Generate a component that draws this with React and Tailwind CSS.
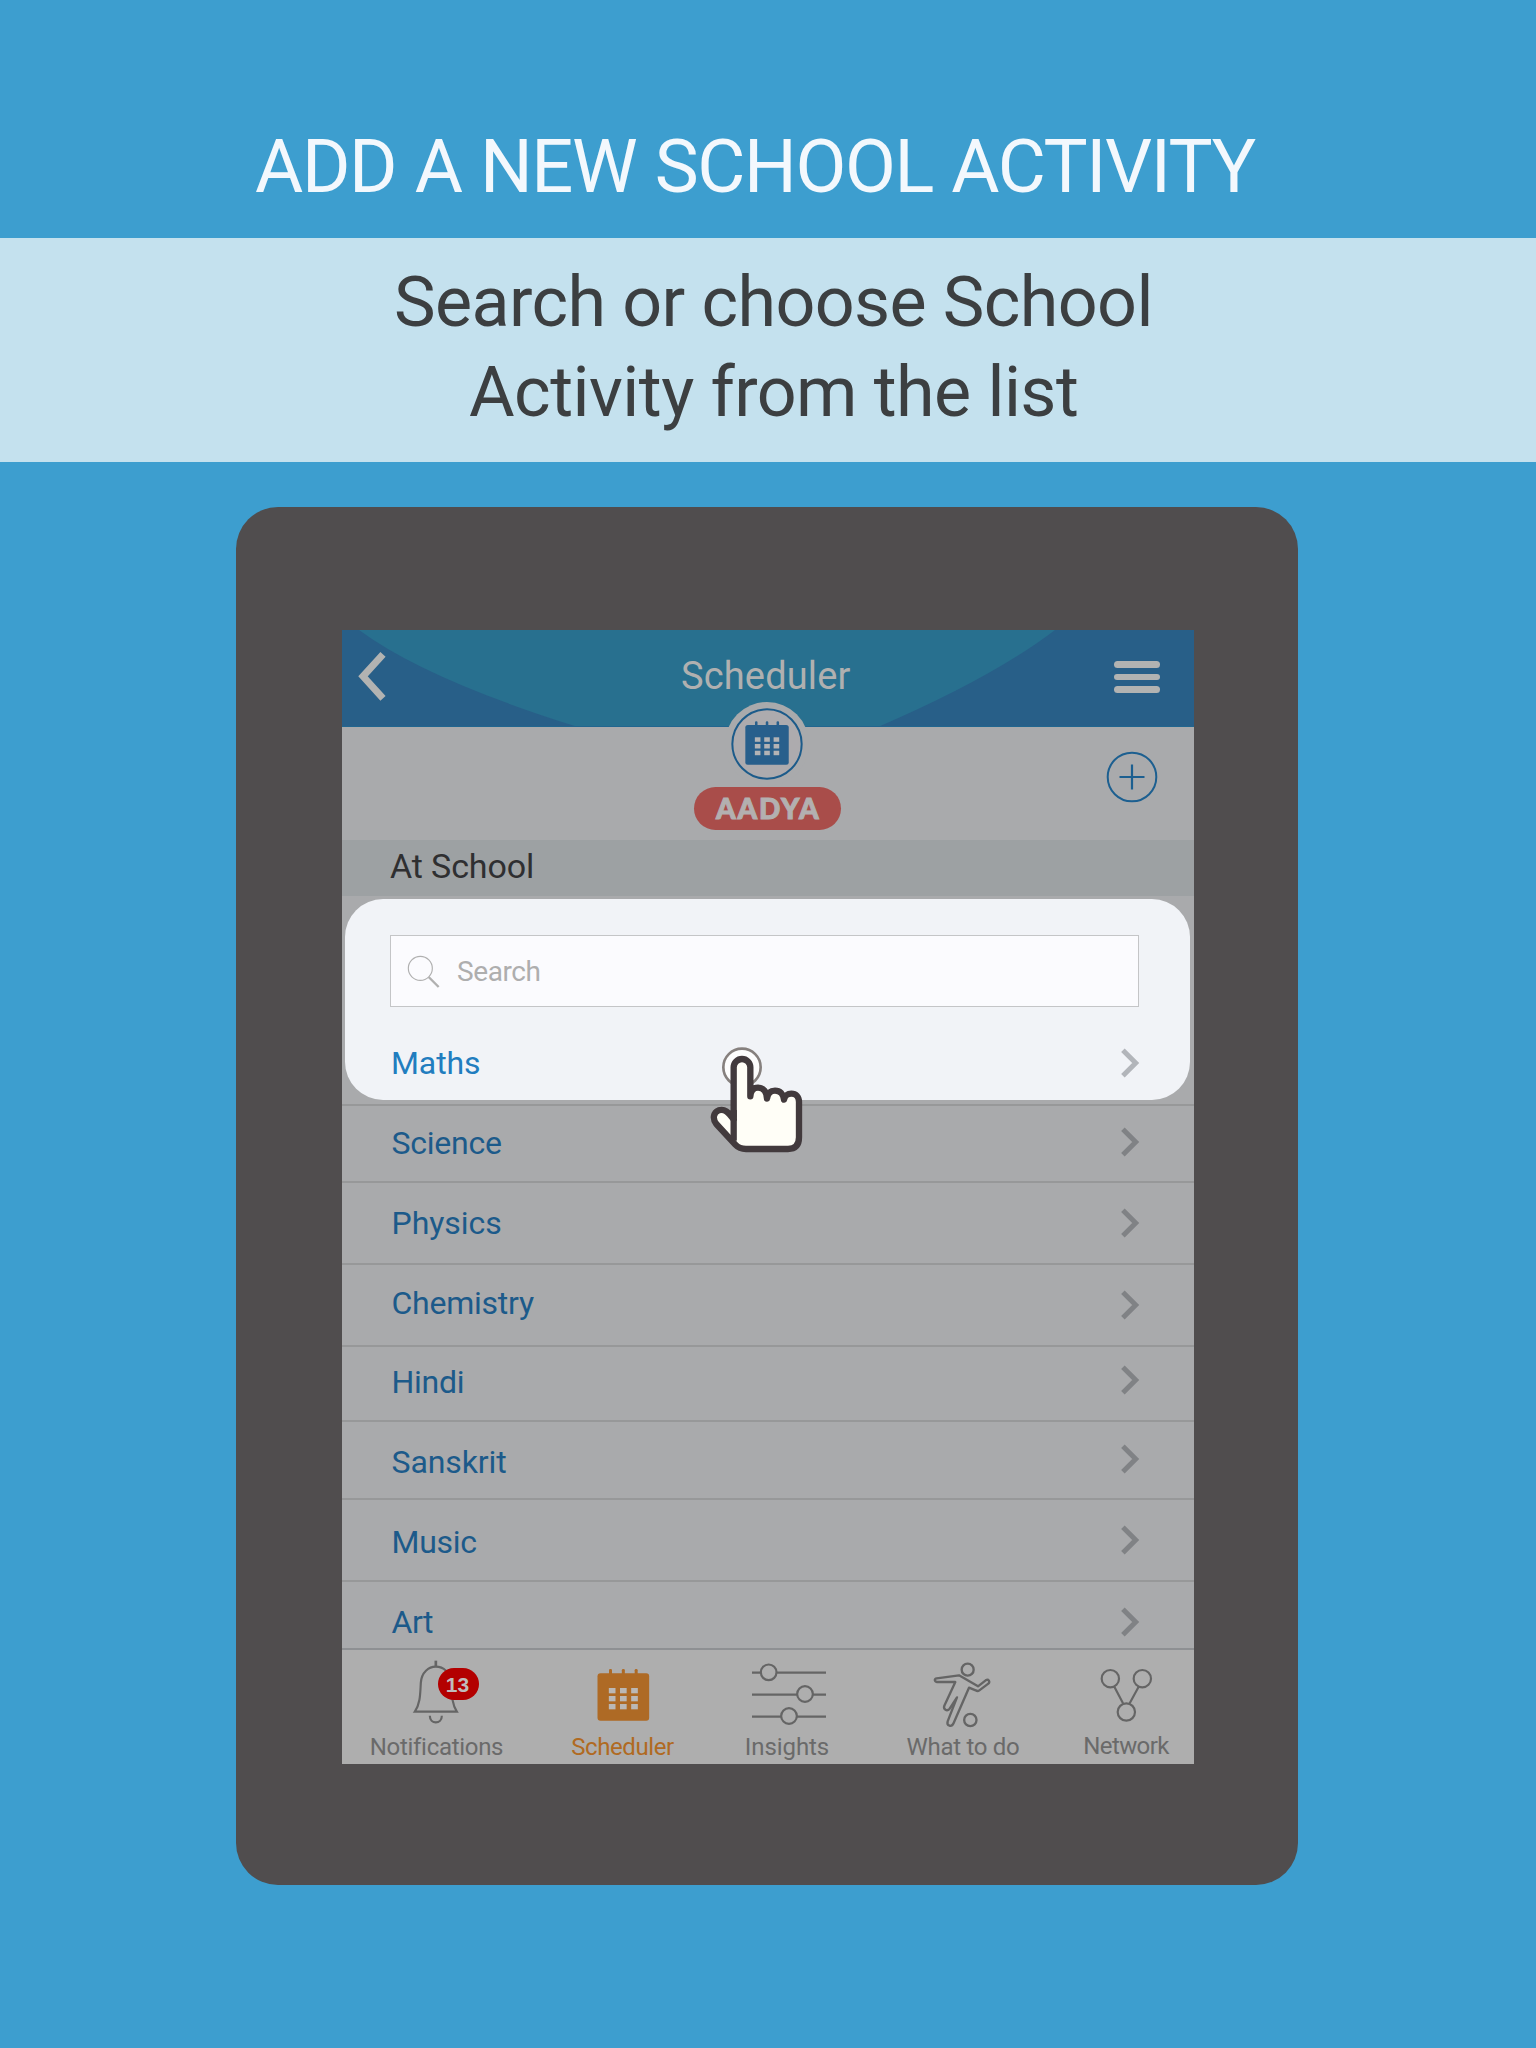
import React from "react";

const subjects = [
  { name: "Science", row: "h-[77px]", text: "mt-[17px] tracking-[-0.25px]", arrow: "mt-[21px]" },
  { name: "Physics", row: "h-[82px]", text: "mt-[20px] tracking-[-0.05px]", arrow: "mt-[25px]" },
  { name: "Chemistry", row: "h-[82px]", text: "mt-[18px] tracking-[-0.25px]", arrow: "mt-[25px]" },
  { name: "Hindi", row: "h-[75px]", text: "mt-[15px] tracking-[-0.3px]", arrow: "mt-[18px]" },
  { name: "Sanskrit", row: "h-[78px]", text: "mt-[20px] tracking-[-0.1px]", arrow: "mt-[22px]" },
  { name: "Music", row: "h-[82px]", text: "mt-[22px] tracking-[-0.3px]", arrow: "mt-[25px]" },
  { name: "Art", row: "h-[68px]", text: "mt-[20px] tracking-[-0.5px]", arrow: "mt-[25px]" },
];

function Chevron({ className }) {
  return (
    <svg className={`h-[30px] w-[20px] shrink-0 ${className}`} viewBox="0 0 20 30" fill="none" stroke="currentColor" strokeWidth="5">
      <path d="M2.900 2.200 15.700 15 2.900 27.800" />
    </svg>
  );
}

function Calendar({ body, cell }) {
  return (
    <g>
      <g fill={body}>
        <rect x="0" y="13" width="155" height="142" rx="9" />
        <rect x="34.500" y="0" width="9" height="20" rx="4" />
        <rect x="73" y="0" width="9" height="20" rx="4" />
        <rect x="111.500" y="0" width="9" height="20" rx="4" />
      </g>
      <g fill={cell}>
        {[57, 81, 105].map((y) =>
          [34, 67.5, 101].map((x) => <rect key={`${x}-${y}`} x={x} y={y} width="20" height="16" />)
        )}
      </g>
    </g>
  );
}

function BellIcon() {
  return (
    <svg className="h-[70px] w-20 overflow-visible" viewBox="199.5 66 240 210" fill="none" stroke="#656565" strokeWidth="6.500">
      <path d="M316 62V80" strokeWidth="8" />
      <path d="M253 215C270 190 269 160 271 128C273 96 295 80 316 80C338 80 360 96 362 128C364 160 363 190 379 215Z" />
      <path d="M298 227C298 254 334 254 334 227" />
    </svg>
  );
}

function SlidersIcon() {
  return (
    <svg className="h-[70px] w-20" viewBox="321 66 240 210" fill="#aeaeae" stroke="#656565" strokeWidth="6.500">
      <path d="M336 98H558M336 164H558M336 230H558" />
      <circle cx="386" cy="97" r="23.500" />
      <circle cx="495" cy="162" r="23.500" />
      <circle cx="447" cy="228" r="23.500" />
    </svg>
  );
}

function PlayerIcon() {
  return (
    <svg className="h-[70px] w-20" viewBox="100 66 240 210" fill="none" stroke="#656565" strokeWidth="7" strokeLinejoin="round">
      <circle cx="234" cy="89" r="18" />
      <circle cx="242" cy="240" r="18.500" />
      <path d="M141 115L208 106L265 139L288 121C297 116 302 125 296 131L269 151Q264 155 258 151L238 143L192 249C186 263 170 258 174 244L202 172L180 206C172 216 160 208 164 197L197 126H142C133 124 134 116 141 115Z" />
    </svg>
  );
}

function NetworkIcon() {
  return (
    <svg className="h-[70px] w-20" viewBox="588 66 240 210" fill="none" stroke="#656565" strokeWidth="6.500">
      <circle cx="661" cy="116" r="26" />
      <circle cx="757" cy="116" r="26" />
      <circle cx="709" cy="216" r="26" />
      <path d="M673 140L699 190M746 140L719 190" />
    </svg>
  );
}

function HandPointer() {
  return (
    <svg className="absolute left-[348px] top-[131px] h-[140px] w-[130px]" viewBox="0 0 390 420">
      <circle cx="156" cy="112" r="56" fill="#fdfdfd" stroke="#86807e" strokeWidth="8" />
      <path
        d="M131 262V112A25 25 0 0 1 181 112V199C182 182 190 173 204 173C220 173 230 185 231 206C233 190 242 182 255 182C270 182 280 192 282 209C284 197 293 191 304 191C318 191 327 200 327 216V322Q327 357 294 357H168Q148 357 136 344L79 282C66 265 71 247 86 241C104 235 114 246 131 268"
        fill="#fffef7" stroke="#423a3d" strokeWidth="19" strokeLinejoin="round" strokeLinecap="round"
      />
      <path d="M131 240V332" stroke="#423a3d" strokeWidth="19" />
    </svg>
  );
}

function NavItem({ label, width, tone, children }) {
  return (
    <div className={`flex flex-col items-center ${width}`}>
      {children}
      <span className={`whitespace-nowrap text-[24px] leading-[28px] ${tone}`}>{label}</span>
    </div>
  );
}

export default function App() {
  return (
    <div className="h-[2048px] w-[1536px] overflow-hidden bg-[#3d9ecf] font-['Roboto',sans-serif]">
      <header className="h-[238px] pl-[255px] pt-[127px]">
        <h1 className="whitespace-nowrap text-[74px] leading-[80px] tracking-[-1.38px] text-[#f3f8fd] [word-spacing:1.4px]">ADD A NEW SCHOOL ACTIVITY</h1>
      </header>
      <section className="h-[224px] whitespace-pre bg-[#c4e1ee] pt-[19px] text-[70px] leading-[90px] text-[#3c3f41]">
        <p className="pl-[394px] tracking-[-0.6px]">Search or choose School</p>
        <p className="pl-[469px] tracking-[-0.56px]">Activity from the list</p>
      </section>

      <main className="ml-[236px] mt-[45px] h-[1378px] w-[1062px] rounded-[42px] bg-[#504d4e] px-[106px] pt-[123px]">
        <div className="flex h-[1134px] w-[852px] flex-col bg-[#a9aaac]">
          <div className="relative flex h-[97px] items-start bg-[#285f88]">
            <svg className="absolute inset-0 h-[97px] w-[852px]" viewBox="0 0 852 97">
              <path d="M17 0Q84 49.500 236 97H536Q651 47.500 713 0Z" fill="#28708f" />
              <path d="M0 96.500H852" stroke="#21668f" />
            </svg>
            <svg className="relative ml-[14px] mt-[21px] h-[52px] w-[32px]" viewBox="0 0 32 52" fill="none" stroke="#b2b3b2" strokeWidth="7">
              <path d="M27 3.300L7 25.300L27 47.300" />
            </svg>
            <h2 className="relative ml-[293px] mt-[24px] text-[38px] leading-[44px] tracking-[0.15px] text-[#b0b0b0]">Scheduler</h2>
            <div className="relative ml-auto mr-[34px] mt-[31px] flex w-[46px] flex-col gap-[6px]">
              <div className="h-[6.500px] rounded-full bg-[#b2b3b2]" />
              <div className="h-[6.500px] rounded-full bg-[#b2b3b2]" />
              <div className="h-[6.500px] rounded-full bg-[#b2b3b2]" />
            </div>
          </div>

          <div className="relative grid h-[113px] grid-cols-[352px_147px_353px] items-start">
            <svg className="absolute left-[383px] top-[-25px] h-[84px] w-[84px]" viewBox="0 0 252 252">
              <circle cx="126" cy="126" r="126" fill="#a9aaac" />
              <circle cx="126" cy="126" r="104" fill="#adabae" stroke="#1c5b8a" strokeWidth="6" />
              <g transform="translate(61 58) scale(.84)">
                <Calendar body="#285f8c" cell="#b3b3b5" />
              </g>
            </svg>
            <div className="col-start-2 mt-[60px] h-[43px] rounded-full bg-[#a94d4a] pl-[22px] font-['Lato',sans-serif] text-[28px] font-black leading-[42px] tracking-[1.84px] text-[#b3b0b0] [-webkit-text-stroke:1px_#b3b0b0]">AADYA</div>
            <svg className="mr-[36px] mt-[24px] h-[52px] w-[52px] justify-self-end" viewBox="0 0 52 52" fill="none" stroke="#1c5f90" strokeWidth="2">
              <circle cx="26" cy="26" r="24.300" />
              <path d="M13.500 26H38.500M26 13.500V38.500" strokeWidth="2.200" />
            </svg>
          </div>

          <div className="h-[56px] bg-[#9da1a3] pl-[48px] pt-[6px] text-[34px] leading-[40px] tracking-[-0.12px] text-[#2f2f31]">At School</div>

          <div className="relative mt-[3px] h-[205px] shrink-0 px-[3px] pr-[4px]">
            <div className="h-[201px] rounded-[38px] bg-[#f1f3f7] pl-[45px] pr-[50px] pt-[36px]">
              <div className="flex h-[72px] w-[749px] items-start border border-[#c4c5c7] bg-[#fbfbfe]">
                <svg className="ml-[14px] mt-[17px] h-[36px] w-[36px]" viewBox="225 189 108 108" fill="none" stroke="#b0b0b0">
                  <circle cx="271" cy="235" r="36" strokeWidth="3.500" />
                  <path d="M296 261L326 291" strokeWidth="7" />
                </svg>
                <span className="ml-[16px] mt-[16px] text-[28px] leading-[40px] tracking-[-0.4px] text-[#aeaeae]">Search</span>
              </div>
              <div className="mt-[36px] flex items-start justify-between pl-px">
                <span className="text-[32px] leading-[40px] tracking-[-0.1px] text-[#217dbf]">Maths</span>
                <Chevron className="mt-[5px] text-[#b2b5ba]" />
              </div>
            </div>
            <HandPointer />
          </div>

          {subjects.map((s) => (
            <div key={s.name} className={`flex shrink-0 items-start justify-between border-t-2 border-[#979899] pl-[49.500px] pr-[54px] ${s.row}`}>
              <span className={`text-[32px] leading-[40px] text-[#1c5a8a] ${s.text}`}>{s.name}</span>
              <Chevron className={`text-[#808285] ${s.arrow}`} />
            </div>
          ))}

          <nav className="flex h-[116px] shrink-0 border-t-2 border-[#8e9093] bg-[#aeaeae] pt-[12px]">
            <NavItem label="Notifications" width="w-[189px]" tone="mt-px text-[#6a6a6a] tracking-[-0.3px]">
              <div className="relative">
                <BellIcon />
                <span className="absolute left-[41px] top-[6px] flex h-[32px] w-[41px] items-center justify-center rounded-full bg-[#b30000] pr-px font-['Liberation_Sans',sans-serif] text-[21px] font-bold leading-none text-[#c0bcbc]">13</span>
              </div>
            </NavItem>
            <NavItem label="Scheduler" width="w-[183px]" tone="mt-px text-[#b06a22] tracking-[-0.39px]">
              <svg className="h-[70px] w-20" viewBox="758.5 66 240 210">
                <g transform="translate(802 87)">
                  <Calendar body="#ae6a25" cell="#bbb8b5" />
                </g>
              </svg>
            </NavItem>
            <NavItem label="Insights" width="w-[146px]" tone="mt-px text-[#6a6a6a] tracking-[-0.08px]">
              <SlidersIcon />
            </NavItem>
            <NavItem label="What to do" width="w-[206px]" tone="mt-px text-[#6a6a6a] tracking-[-0.3px]">
              <PlayerIcon />
            </NavItem>
            <NavItem label="Network" width="w-[120px]" tone="text-[#6a6a6a] tracking-[-0.6px]">
              <NetworkIcon />
            </NavItem>
          </nav>
        </div>
      </main>
    </div>
  );
}
